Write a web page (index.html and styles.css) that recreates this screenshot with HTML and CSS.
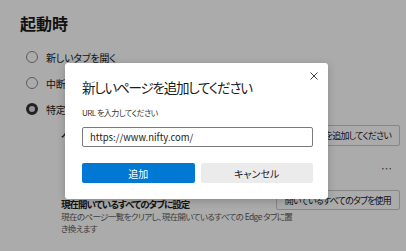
FILE: index.html
```html
<!DOCTYPE html>
<html lang="ja">
<head>
  <meta charset="UTF-8">
  <title>起動時</title>
  <link rel="stylesheet" href="styles.css">
</head>
<body>
  <div class="page">
    <h2 class="section-title">起動時</h2>

    <div class="radio-row">
      <span class="radio"></span>
      <span class="radio-label">新しいタブを開く</span>
    </div>
    <div class="radio-row">
      <span class="radio"></span>
      <span class="radio-label">中断したところから続ける</span>
    </div>
    <div class="radio-row">
      <span class="radio checked"></span>
      <span class="radio-label">特定のページを開く</span>
    </div>

    <div class="sub">
      <div class="sub-row pages-row">
        <span class="sub-label">ページ</span>
        <button class="outline-button">新しいページを追加してください</button>
      </div>
      <div class="sub-row more-row">
        <span class="more">…</span>
      </div>
      <div class="use-block">
        <div class="sub-row use-head">
          <div class="use-title">現在開いているすべてのタブに設定</div>
          <button class="outline-button">開いているすべてのタブを使用</button>
        </div>
        <div class="use-desc">現在のページ一覧をクリアし、現在開いているすべての Edge タブに置<br>き換えます</div>
      </div>
    </div>
  </div>

  <div class="overlay"></div>

  <div class="dialog">
    <button class="close-button" title="閉じる">
      <svg width="8" height="8" viewBox="0 0 8 8">
        <path d="M0.5 0.5 L7.5 7.5 M7.5 0.5 L0.5 7.5" stroke="#444" stroke-width="1" fill="none"/>
      </svg>
    </button>
    <h1 class="dialog-title">新しいページを追加してください</h1>
    <label class="field-label" for="url">URL を入力してください</label>
    <input class="url-input" id="url" type="text" value="https://www.nifty.com/">
    <div class="dialog-buttons">
      <button class="primary">追加</button>
      <button class="secondary">キャンセル</button>
    </div>
  </div>
</body>
</html>
```

FILE: styles.css
```css
* {
  box-sizing: border-box;
}

body {
  margin: 0;
  font-family: "Noto Sans CJK JP", "Noto Sans", sans-serif;
  font-feature-settings: "palt";
  background: #ffffff;
  color: #1b1b1b;
  width: 406px;
  height: 251px;
  overflow: hidden;
  position: relative;
}

.page {
  padding: 12px 6px 0 20px;
}

.section-title {
  margin: 0 0 10px;
  font-size: 16px;
  line-height: 22px;
  font-weight: 600;
}

.radio-row {
  display: flex;
  align-items: center;
  gap: 8px;
  height: 26px;
  margin-left: 6px;
}

.radio {
  width: 12px;
  height: 12px;
  border: 1px solid #8a8a8a;
  border-radius: 50%;
  flex-shrink: 0;
}

.radio.checked {
  border: 3.5px solid #333333;
  background: #dcdcdc;
}

.radio-label {
  font-size: 10px;
  letter-spacing: -0.2px;
}

.sub {
  margin-left: 41px;
}

.sub-row {
  display: flex;
  justify-content: space-between;
  align-items: center;
}

.pages-row {
  height: 22px;
  margin-top: 2px;
}

.more-row {
  height: 22px;
  margin-top: 11px;
  justify-content: flex-end;
  padding-right: 8px;
}

.more {
  font-size: 11px;
  color: #555;
}

.sub-label {
  font-size: 11px;
  font-weight: 600;
}

.outline-button {
  font-family: inherit;
  font-feature-settings: "palt";
  font-size: 9px;
  letter-spacing: -0.8px;
  color: #1b1b1b;
  background: #ffffff;
  border: 1px solid #c8c8c8;
  border-radius: 2px;
  height: 21px;
  padding: 0 8px;
  white-space: nowrap;
}

.use-block {
  margin-top: 11px;
}

.use-head {
  align-items: flex-end;
}

.use-head .outline-button {
  height: 20px;
}

.use-title {
  font-size: 9.5px;
  font-weight: 600;
  line-height: 12px;
  letter-spacing: -1px;
}

.use-desc {
  font-size: 8.5px;
  line-height: 12px;
  letter-spacing: -0.6px;
  white-space: nowrap;
  color: #5d5d5d;
}

.overlay {
  position: absolute;
  inset: 0;
  background: rgba(0, 0, 0, 0.33);
}

.dialog {
  position: absolute;
  left: 65px;
  top: 63px;
  width: 263px;
  height: 136px;
  background: #ffffff;
  border-radius: 3px;
  box-shadow: 0 2px 8px rgba(0, 0, 0, 0.2);
  padding: 14px 15px 16px 17px;
  display: flex;
  flex-direction: column;
}

.close-button {
  position: absolute;
  top: 8px;
  right: 9px;
  width: 10px;
  height: 10px;
  padding: 1px;
  border: none;
  background: none;
  display: flex;
}

.dialog-title {
  margin: 0;
  font-size: 13.5px;
  line-height: 20px;
  font-weight: 400;
  letter-spacing: -1.2px;
  color: #1b1b1b;
}

.field-label {
  margin-top: 10px;
  font-size: 8px;
  line-height: 12px;
  letter-spacing: -0.5px;
  color: #333;
}

.url-input {
  margin-top: 8px;
  height: 20px;
  width: 100%;
  border: 1px solid #7a7a7a;
  border-radius: 2px;
  padding: 0 7px;
  font-family: "Noto Sans CJK JP", sans-serif;
  font-size: 9.5px;
  color: #1b1b1b;
}

.dialog-buttons {
  margin-top: 16px;
  display: flex;
  gap: 6px;
}

.dialog-buttons button {
  flex: 1;
  height: 20px;
  border: none;
  border-radius: 2px;
  font-family: inherit;
  font-feature-settings: "palt";
  font-size: 10px;
}

.primary {
  background: #0078d4;
  color: #ffffff;
}

.secondary {
  background: #ebebeb;
  color: #1b1b1b;
}
```
